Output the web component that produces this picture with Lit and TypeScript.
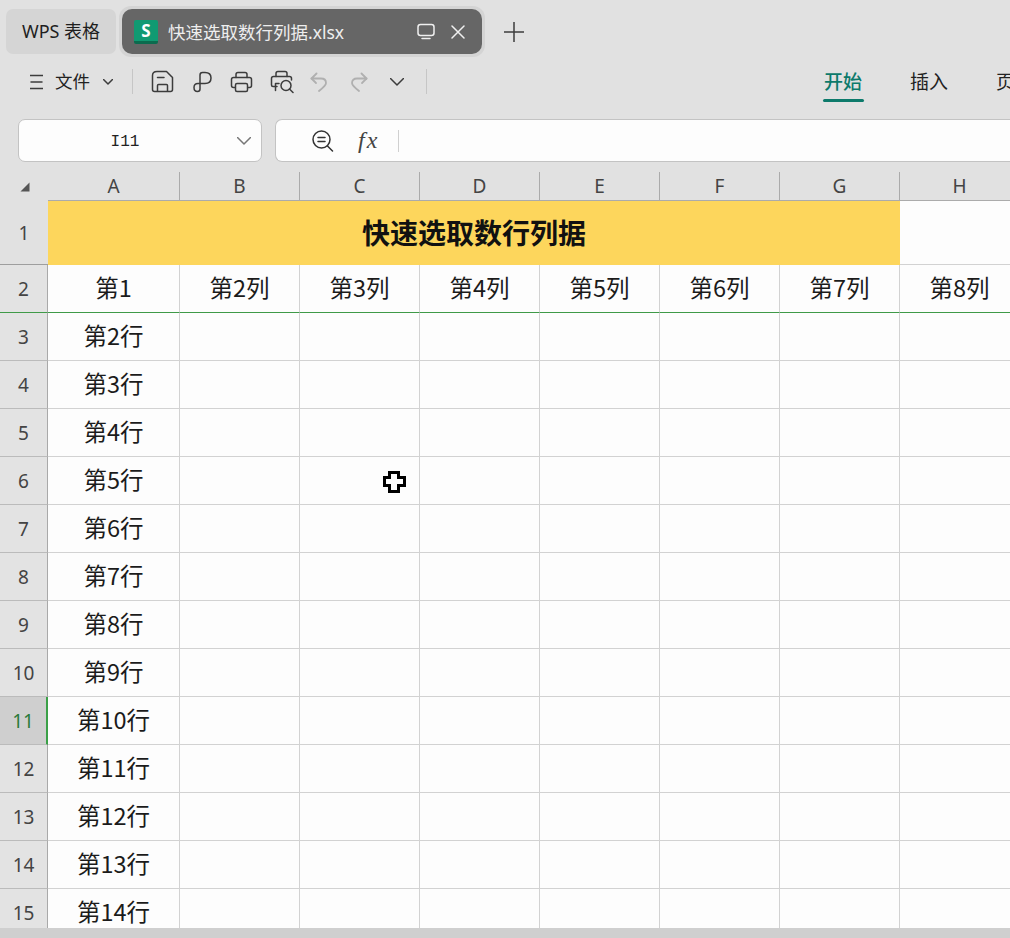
import { LitElement, css, html, svg } from 'lit'
import { customElement } from 'lit/decorators.js'

const COLS = ['A', 'B', 'C', 'D', 'E', 'F', 'G', 'H']
const HEADERS = ['第1', '第2列', '第3列', '第4列', '第5列', '第6列', '第7列', '第8列']
const ROWS = Array.from({ length: 13 }, (_, i) => i + 3)

function icon(w: number, h: number, body: unknown, cls = '') {
  return html`<svg class="icon ${cls}" width=${w} height=${h} viewBox="0 0 ${w} ${h}">${body}</svg>`
}

const icons = {
  save: svg`<path d="M6 1.5H15.5L21.5 7.5V19.5Q21.5 21.5 19.5 21.5H3.5Q1.5 21.5 1.5 19.5V5.5Q1.5 1.5 6 1.5Z"/><path d="M6.5 7.5H13"/><path d="M6.5 21V15.5Q6.5 14.5 7.5 14.5H15.5Q16.5 14.5 16.5 15.5V21"/>`,
  share: svg`<path d="M8 18V4Q8 1.5 10.5 1.5H13Q19 1.5 19 7Q19 12.5 13 12.5H6Q2 12.5 2 16.5Q2 20.5 5.5 20.5Q8 20.5 8 18"/>`,
  print: svg`<path d="M6 6.5V3.5Q6 1.5 8 1.5H15Q17 1.5 17 3.5V6.5"/><path d="M5 16.5H3.5Q1.5 16.5 1.5 14.5V8.5Q1.5 6.5 3.5 6.5H19.5Q21.5 6.5 21.5 8.5V14.5Q21.5 16.5 19.500 16.5H18"/><rect x="5.5" y="12.5" width="12" height="8" rx="1.5"/>`,
  preview: svg`<path d="M6 6.5V3.5Q6 1.5 8 1.5H15Q17 1.5 17 3.5V6.5"/><path d="M7 16.5H3Q1.5 16.5 1.5 15V8.5Q1.5 6.5 3.5 6.5H19.5Q21.5 6.5 21.5 8.5V10"/><path d="M5.5 20.5V13.5H9"/><circle cx="16" cy="15.5" r="5"/><path d="M19.5 19L23 22.5"/>`,
  undo: svg`<path d="M6.5 1.5L1.5 6.5H11Q16 6.5 16 11Q16 13.5 9 19"/><path d="M1.5 6.5L6 11"/>`,
  redo: svg`<path d="M10.5 1.5L15.5 6.5H6Q1 6.5 1 11Q1 13.5 8 19"/><path d="M15.5 6.5L11 11"/>`,
}

@customElement('app-root')
export class AppRoot extends LitElement {
  renderTabs() {
    return html`
      <div class="tabbar">
        <div class="home-tab">WPS 表格</div>
        <div class="doc-ring">
          <div class="doc-tab">
            <div class="logo"><span>S</span></div>
            <span class="doc-name">快速选取数行列据.xlsx</span>
            ${icon(18, 17, svg`<rect x="1" y="1.5" width="16" height="11" rx="2.5"/><path d="M5 15.5H13"/>`, 'monitor')}
            ${icon(14, 14, svg`<path d="M1 1L13 13M13 1L1 13"/>`, 'close')}
          </div>
        </div>
        ${icon(20, 20, svg`<path d="M10 0V20M0 10H20"/>`, 'plus')}
      </div>
    `
  }

  renderToolbar() {
    return html`
      <div class="toolbar">
        ${icon(13, 16, svg`<path d="M0 1.5H13M1 8H12M0 14.5H13"/>`, 'menu')}
        <span class="file">文件</span>
        ${icon(10, 6, svg`<path d="M.5 .5L5 5L9.500 .5"/>`, 'file-caret')}
        <i class="sep first"></i>
        ${icon(23, 23, icons.save, 'save')}
        ${icon(21, 22, icons.share, 'share')}
        ${icon(23, 22, icons.print, 'print')}
        ${icon(24, 24, icons.preview, 'preview')}
        ${icon(18, 20, icons.undo, 'undo off')}
        ${icon(17, 20, icons.redo, 'redo off')}
        ${icon(14, 8, svg`<path d="M.5 .5L7 7L13.500 .5"/>`, 'more')}
        <i class="sep"></i>
        <div class="ribbon">
          <span class="tab active">开始</span>
          <span class="tab">插入</span>
          <span class="tab">页面</span>
        </div>
      </div>
    `
  }

  renderFormula() {
    return html`
      <div class="formula">
        <div class="name-box">
          <span class="cell-ref">I11</span>
          ${icon(14, 8, svg`<path d="M.5 .5L7 7L13.500 .5"/>`, 'name-caret')}
        </div>
        <div class="fx-box">
          ${icon(22, 22, svg`<circle cx="9.500" cy="9.500" r="8.500"/><path d="M6 7.500H13M6 11.500H13M15.500 16L20.500 21"/>`, 'zoom')}
          <span class="fx">fx</span>
          <i class="fx-sep"></i>
        </div>
      </div>
    `
  }

  renderSheet() {
    return html`
      <div class="sheet">
        <div class="corner">${icon(10, 10, svg`<path d="M9.500 .5V9.500H.5Z"/>`, 'tri')}</div>
        ${COLS.map(c => html`<div class="col-head">${c}</div>`)}

        <div class="row-head title-head">1</div>
        <div class="title">快速选取数行列据</div>
        <div class="cell blank"></div>

        <div class="row-head green">2</div>
        ${HEADERS.map(h => html`<div class="cell green">${h}</div>`)}

        ${ROWS.map(r => html`
          <div class="row-head ${r === 11 ? 'current' : ''}">${r}</div>
          <div class="cell">第${r - 1}行</div>
          ${COLS.slice(1).map(() => html`<div class="cell"></div>`)}
        `)}
        ${icon(23, 22, svg`<path class="cursor" d="M6.500 1.500H15.500V6.500H21.500V14.500H15.500V20.500H6.500V14.500H1.500V6.500H6.500Z"/>`, 'pointer')}
      </div>
    `
  }

  render() {
    return html`
      ${this.renderTabs()}
      ${this.renderToolbar()}
      ${this.renderFormula()}
      ${this.renderSheet()}
      <div class="footer"></div>
    `
  }

  static styles = css`
    :host {
      display: flex;
      flex-direction: column;
      width: 1010px;
      height: 938px;
      overflow: hidden;
      background: #e1e1e1;
      color: #222;
      font-family: 'Noto Sans CJK SC', 'Noto Sans', sans-serif;
    }
    .icon {
      display: block;
      flex: none;
      fill: none;
      stroke: #3c3c3c;
      stroke-width: 1.5;
      stroke-linecap: round;
      stroke-linejoin: round;
    }
    .tabbar {
      height: 60px;
      padding: 6px 0 0 6px;
      box-sizing: border-box;
      display: flex;
      align-items: flex-start;
      flex: none;
    }
    .home-tab {
      width: 110px;
      height: 45px;
      margin-top: 3px;
      background: #d5d5d5;
      border-radius: 7px;
      font: 18px/45px 'Noto Sans', 'Noto Sans CJK SC', sans-serif;
      text-align: center;
      color: #1e1e1e;
    }
    .doc-ring {
      margin-left: 3px;
      padding: 3px;
      background: #d4d4d4;
      border-radius: 12px;
    }
    .doc-tab {
      width: 360px;
      height: 45px;
      box-sizing: border-box;
      padding-left: 12px;
      background: #666;
      border-radius: 10px;
      display: flex;
      align-items: center;
    }
    .logo {
      width: 24px;
      height: 24px;
      border-radius: 2px;
      background: linear-gradient(#109a72 0 21px, #0b6b4e 21px);
      color: #fff;
      font: 700 17px/22px 'Noto Sans', sans-serif;
      text-align: center;
    }
    .doc-name {
      margin-left: 10px;
      width: 249px;
      font: 17.5px/24px 'Noto Sans', 'Noto Sans CJK SC', sans-serif;
      color: #eee;
      white-space: nowrap;
    }
    .monitor, .close {
      stroke: #f0f0f0;
    }
    .close {
      margin-left: 16px;
    }
    .plus {
      margin: 16px 0 0 19px;
    }
    .toolbar {
      height: 45px;
      box-sizing: border-box;
      padding: 0 0 2px 30px;
      flex: none;
      display: flex;
      align-items: center;
    }
    .file {
      margin-left: 12px;
      padding-bottom: 2px;
      font-size: 17.5px;
      white-space: nowrap;
      flex: none;
    }
    .file-caret {
      margin-left: 13px;
    }
    .sep {
      width: 1px;
      height: 25px;
      background: #c6c6c6;
      margin-left: 22px;
      flex: none;
    }
    .sep.first {
      margin-left: 19px;
    }
    .save { margin-left: 18px; }
    .share { margin-left: 18px; }
    .print { margin-left: 17px; }
    .preview { margin-left: 17px; }
    .undo { margin-left: 16px; }
    .redo { margin-left: 23px; }
    .more { margin-left: 22px; }
    .off {
      stroke: #b0b0b0;
      stroke-width: 1.8;
    }
    .ribbon {
      margin-left: 397px;
      padding-bottom: 1px;
      display: flex;
      gap: 48px;
      font-size: 19px;
      white-space: nowrap;
      flex: none;
    }
    .tab {
      position: relative;
      line-height: 26px;
      width: 38px;
    }
    .tab.active {
      color: #0d7a6b;
      font-weight: 500;
    }
    .tab.active::after {
      content: '';
      position: absolute;
      left: -1px;
      right: -2px;
      bottom: -8px;
      height: 3px;
      border-radius: 2px;
      background: #0d7a6b;
    }
    .formula {
      margin-top: 14px;
      height: 43px;
      flex: none;
      display: flex;
      padding-left: 18px;
      gap: 13px;
    }
    .name-box, .fx-box {
      box-sizing: border-box;
      height: 43px;
      background: #fdfdfd;
      border: 1px solid #c3c3c3;
      display: flex;
      align-items: center;
    }
    .name-box {
      width: 244px;
      border-radius: 7px;
      position: relative;
    }
    .cell-ref {
      width: 212px;
      padding-top: 2px;
      text-align: center;
      font: 16px 'Liberation Mono', monospace;
    }
    .name-caret {
      stroke: #777;
      margin-left: 6px;
    }
    .fx-box {
      flex: 1;
      border-right: 0;
      border-radius: 7px 0 0 7px;
      padding-left: 36px;
    }
    .zoom {
      stroke: #333;
    }
    .fx {
      margin-left: 24px;
      font: italic 24px 'Liberation Serif', serif;
      letter-spacing: 2px;
      color: #444;
      width: 22px;
      white-space: nowrap;
    }
    .fx-sep {
      width: 1px;
      height: 22px;
      margin-left: 18px;
      background: #d0d0d0;
    }
    .sheet {
      position: relative;
      margin-top: 10px;
      height: 756px;
      flex: none;
      overflow: hidden;
      display: grid;
      grid-template-columns: 48px 132px repeat(7, 120px);
      grid-template-rows: 29px 64px repeat(14, 48px);
      grid-auto-columns: 120px;
    }
    .corner {
      display: flex;
      align-items: center;
      padding-left: 20px;
    }
    .tri {
      fill: #555;
      stroke: none;
    }
    .col-head {
      display: flex;
      align-items: center;
      justify-content: center;
      font: 19px 'Noto Sans', sans-serif;
      color: #444;
      border-right: 1px solid #ababab;
      box-sizing: border-box;
      border-bottom: 1px solid #ababab;
    }
    .row-head {
      display: flex;
      align-items: center;
      justify-content: center;
      font: 19px 'Noto Sans', sans-serif;
      color: #444;
      box-sizing: border-box;
      border-right: 1px solid #a9a9a9;
      border-bottom: 1px solid #bbb;
      background: #e3e3e3;
    }
    .row-head.current {
      background: #cfcfcf;
      color: #2a7a3a;
      border-right: 2px solid #3aa047;
    }
    .title-head {
      background: #e1e1e1;
      border-right: 0;
      border-bottom: 1px solid #9e9e9e;
    }
    .title {
      grid-column: span 7;
      background: #fdd65c;
      color: #111;
      font-size: 28px;
      font-weight: 700;
      display: flex;
      align-items: center;
      justify-content: center;
      padding-bottom: 3px;
      box-sizing: border-box;
    }
    .cell {
      box-sizing: border-box;
      display: flex;
      align-items: center;
      justify-content: center;
      background: #fdfdfd;
      border-right: 1px solid #d2d2d2;
      border-bottom: 1px solid #d2d2d2;
      font-size: 23.5px;
      color: #1b1b1b;
      white-space: nowrap;
      padding-bottom: 4px;
    }
    .cell.green, .row-head.green {
      border-bottom: 1px solid #3f9a48;
    }
    .pointer {
      position: absolute;
      left: 383px;
      top: 299px;
    }
    .cursor {
      fill: #fff;
      stroke: #000;
      stroke-width: 3;
      stroke-linejoin: miter;
      stroke-linecap: butt;
    }
    .footer {
      height: 10px;
      flex: none;
      background: #cfcfcf;
    }
  `
}

declare global {
  interface HTMLElementTagNameMap {
    'app-root': AppRoot
  }
}
